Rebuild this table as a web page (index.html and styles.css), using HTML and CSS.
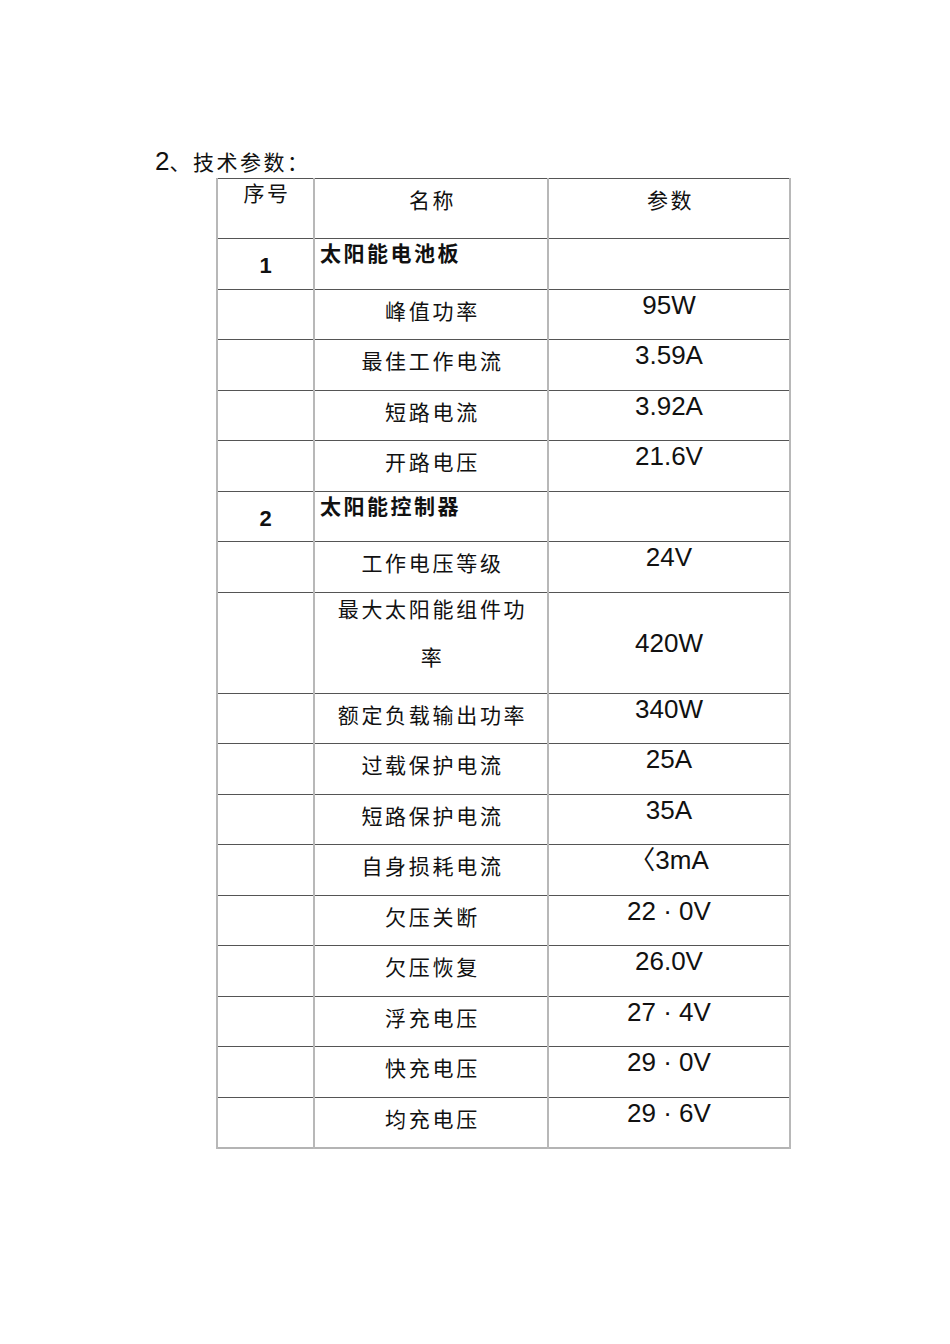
FILE: index.html
```html
<!DOCTYPE html>
<html lang="zh-CN">
<head>
<meta charset="utf-8">
<title>技术参数</title>
<link rel="stylesheet" href="styles.css">
</head>
<body>
<div class="page">
  <div class="title"><span class="num">2</span><span class="cn">、技术参数：</span></div>
  <table class="spec">
    <colgroup><col class="c1"><col class="c2"><col class="c3"></colgroup>
    <tr class="head">
      <td class="h-seq">序号</td>
      <td class="h-name">名称</td>
      <td class="h-val">参数</td>
    </tr>
    <tr class="row">
      <td class="seq">1</td>
      <td class="section">太阳能电池板</td>
      <td class="val"></td>
    </tr>
    <tr class="row"><td></td><td class="name">峰值功率</td><td class="val">95W</td></tr>
    <tr class="row"><td></td><td class="name">最佳工作电流</td><td class="val">3.59A</td></tr>
    <tr class="row"><td></td><td class="name">短路电流</td><td class="val">3.92A</td></tr>
    <tr class="row"><td></td><td class="name">开路电压</td><td class="val">21.6V</td></tr>
    <tr class="row">
      <td class="seq">2</td>
      <td class="section">太阳能控制器</td>
      <td class="val"></td>
    </tr>
    <tr class="row"><td></td><td class="name">工作电压等级</td><td class="val">24V</td></tr>
    <tr class="row tall"><td></td><td class="name wrap"><div class="wrap-in">最大太阳能组件功率</div></td><td class="val mid">420W</td></tr>
    <tr class="row"><td></td><td class="name">额定负载输出功率</td><td class="val">340W</td></tr>
    <tr class="row"><td></td><td class="name">过载保护电流</td><td class="val">25A</td></tr>
    <tr class="row"><td></td><td class="name">短路保护电流</td><td class="val">35A</td></tr>
    <tr class="row"><td></td><td class="name">自身损耗电流</td><td class="val">〈3mA</td></tr>
    <tr class="row"><td></td><td class="name">欠压关断</td><td class="val">22 · 0V</td></tr>
    <tr class="row"><td></td><td class="name">欠压恢复</td><td class="val">26.0V</td></tr>
    <tr class="row"><td></td><td class="name">浮充电压</td><td class="val">27 · 4V</td></tr>
    <tr class="row"><td></td><td class="name">快充电压</td><td class="val">29 · 0V</td></tr>
    <tr class="row"><td></td><td class="name">均充电压</td><td class="val">29 · 6V</td></tr>
  </table>
</div>
</body>
</html>
```

FILE: styles.css
```css
html, body {
  margin: 0;
  padding: 0;
  background: #ffffff;
}

body {
  font-family: "Liberation Sans", "Noto Sans CJK SC", sans-serif;
  color: #111111;
}

.page {
  padding: 148px 0 0 155px;
}

.title {
  height: 30px;
  line-height: 27px;
  white-space: nowrap;
}

.title .num {
  font-size: 26px;
}

.title .cn {
  font-family: "Noto Sans CJK SC", sans-serif;
  font-size: 21px;
  letter-spacing: 2.5px;
}

.spec {
  margin-left: 61px;
  border-collapse: collapse;
  table-layout: fixed;
  width: 573px;
  border-top: 1px solid #666666;
  border-bottom: 2px solid #b4b4b4;
  border-left: 2px solid #b4b4b4;
  border-right: 2px solid #b4b4b4;
}

.c1 { width: 97px; }
.c2 { width: 234px; }
.c3 { width: 242px; }

.spec td {
  padding: 0;
  vertical-align: top;
  border-top: 1px solid #555555;
  border-bottom: 1px solid #555555;
  border-left: 2px solid #b8b8b8;
  border-right: 2px solid #b8b8b8;
}

.head {
  height: 60px;
}

.row {
  height: 50.5px;
}

.row.tall {
  height: 101px;
}

.h-seq, .h-name, .h-val {
  font-family: "Noto Sans CJK SC", sans-serif;
  font-size: 21px;
  letter-spacing: 2.5px;
  line-height: 30px;
  text-align: center;
}

.h-seq {
  line-height: 26px;
  padding-top: 0 !important;
  padding-left: 3px !important;
}

.h-name, .h-val {
  padding-top: 5px !important;
  padding-left: 3px !important;
}

.seq {
  font-size: 22px;
  font-weight: bold;
  text-align: center;
  vertical-align: middle !important;
  padding-top: 5px !important;
  line-height: 30px;
}

.section {
  font-family: "Noto Sans CJK SC", sans-serif;
  font-weight: bold;
  font-size: 21px;
  letter-spacing: 2.5px;
  line-height: 26px;
  text-align: left;
  padding: 0 0 0 5px !important;
  white-space: nowrap;
}

.name {
  font-family: "Noto Sans CJK SC", sans-serif;
  font-size: 21px;
  letter-spacing: 2.7px;
  line-height: 30px;
  text-align: center;
  padding: 5px 16px 0 19px !important;
}

.name.wrap {
  line-height: 48px;
  padding-top: 0 !important;
}

.wrap-in {
  margin-top: -9px;
}

.val {
  font-size: 26px;
  line-height: 30px;
  text-align: center;
}

.val.mid {
  vertical-align: middle !important;
  padding-top: 0 !important;
}
```
